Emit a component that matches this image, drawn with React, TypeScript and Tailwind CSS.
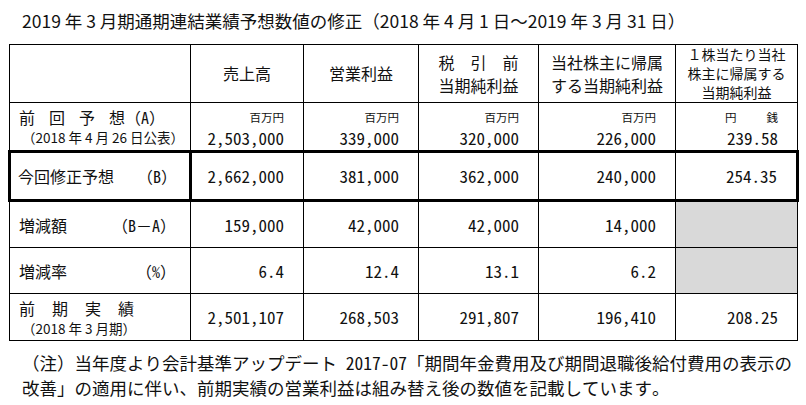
import React from 'react'

const prev = ['2,503,000', '339,000', '320,000', '226,000', '239.58']

const cell = 'border border-black'
const num = 'border border-black text-right pr-[19px] text-[17px] leading-[22px]'

const App = () => {
  return (
    <div className="w-[806px] h-[405px] bg-white text-[#111] font-['Noto_Sans_Mono_CJK_JP','Noto_Sans_CJK_JP',sans-serif] overflow-hidden">
      {/* Title */}
      <div className="pt-[10px] pl-[22px] text-[17.5px] leading-[22px] whitespace-nowrap font-['Noto_Sans_CJK_JP',sans-serif]">
        2019 年 3 月期通期連結業績予想数値の修正（2018 年 4 月 1 日～2019 年 3 月 31 日）
      </div>

      {/* Table */}
      <table className="ml-[8px] mt-[12px] border-collapse table-fixed w-[789px]">
        <colgroup>
          <col className="w-[181px]" />
          <col className="w-[113px]" />
          <col className="w-[115px]" />
          <col className="w-[120px]" />
          <col className="w-[137px]" />
          <col className="w-[122px]" />
        </colgroup>
        <tbody>
          <tr className="h-[58px] text-[16px] leading-[23px] text-center">
            <td className={cell}></td>
            <td className={cell}>売上高</td>
            <td className={cell}>営業利益</td>
            <td className={cell}>
              <div>税　引　前</div>
              <div>当期純利益</div>
            </td>
            <td className={cell}>
              <div>当社株主に帰属</div>
              <div>する当期純利益</div>
            </td>
            <td className={`${cell} text-[14px] leading-[19px]`}>
              <div>１株当たり当社</div>
              <div>株主に帰属する</div>
              <div>当期純利益</div>
            </td>
          </tr>

          <tr className="h-[49px]">
            <td className={`${cell} pl-[9px]`}>
              <div className="text-[16px] leading-[22px] whitespace-nowrap">
                <span className="tracking-[14px]">前回予</span>
                <span>想（A）</span>
              </div>
              <div className="text-[13.5px] leading-[19px] pl-[3px] whitespace-nowrap font-['Noto_Sans_CJK_JP',sans-serif]">（2018 年 4 月 26 日公表）</div>
            </td>
            {prev.map((v, i) => (
              <td key={v} className={num}>
                <div className="text-[11.5px] leading-[14px] pt-[4px] mb-[4px]">
                  {i === 4 ? (
                    <span className="inline-flex w-[53px] justify-between"><span>円</span><span>銭</span></span>
                  ) : (
                    '百万円'
                  )}
                </div>
                <div className="leading-[20px]">{v}</div>
              </td>
            ))}
          </tr>

          <tr className="h-[49px]">
            <td className="border-[3px] border-black pl-[7px] pr-[12px]">
              <div className="flex justify-between text-[16px] leading-[22px] whitespace-nowrap">
                <span>今回修正予想</span>
                <span>（B）</span>
              </div>
            </td>
            <td className={`${num} border-y-[3px]`}>2,662,000</td>
            <td className={`${num} border-y-[3px]`}>381,000</td>
            <td className={`${num} border-y-[3px]`}>362,000</td>
            <td className={`${num} border-y-[3px]`}>240,000</td>
            <td className={`${num} border-y-[3px] border-r-[3px]`}>254.35</td>
          </tr>

          <tr className="h-[47px]">
            <td className={`${cell} pl-[9px] pr-[14px]`}>
              <div className="flex justify-between text-[16px] leading-[22px] whitespace-nowrap">
                <span>増減額</span>
                <span>（B－A）</span>
              </div>
            </td>
            <td className={num}>159,000</td>
            <td className={num}>42,000</td>
            <td className={num}>42,000</td>
            <td className={num}>14,000</td>
            <td className={`${cell} bg-[#d9d9d9]`}></td>
          </tr>

          <tr className="h-[46px]">
            <td className={`${cell} pl-[9px] pr-[14px]`}>
              <div className="flex justify-between text-[16px] leading-[22px] whitespace-nowrap">
                <span>増減率</span>
                <span>（%）</span>
              </div>
            </td>
            <td className={num}>6.4</td>
            <td className={num}>12.4</td>
            <td className={num}>13.1</td>
            <td className={num}>6.2</td>
            <td className={`${cell} bg-[#d9d9d9]`}></td>
          </tr>

          <tr className="h-[47px]">
            <td className={`${cell} pl-[9px]`}>
              <div className="text-[16px] leading-[21px] whitespace-nowrap">
                <span className="tracking-[17px]">前期実</span>
                <span>績</span>
              </div>
              <div className="text-[13.5px] leading-[18px] pl-[3px] whitespace-nowrap font-['Noto_Sans_CJK_JP',sans-serif]">（2018 年 3 月期）</div>
            </td>
            <td className={num}>2,501,107</td>
            <td className={num}>268,503</td>
            <td className={num}>291,807</td>
            <td className={num}>196,410</td>
            <td className={num}>208.25</td>
          </tr>
        </tbody>
      </table>

      {/* Note */}
      <div className="pl-[22px] pt-[9px] text-[17.5px] leading-[25px] whitespace-nowrap">
        <div>（注）当年度より会計基準アップデート 2017-07「期間年金費用及び期間退職後給付費用の表示の</div>
        <div>改善」の適用に伴い、前期実績の営業利益は組み替え後の数値を記載しています。</div>
      </div>
    </div>
  )
}

export default App
